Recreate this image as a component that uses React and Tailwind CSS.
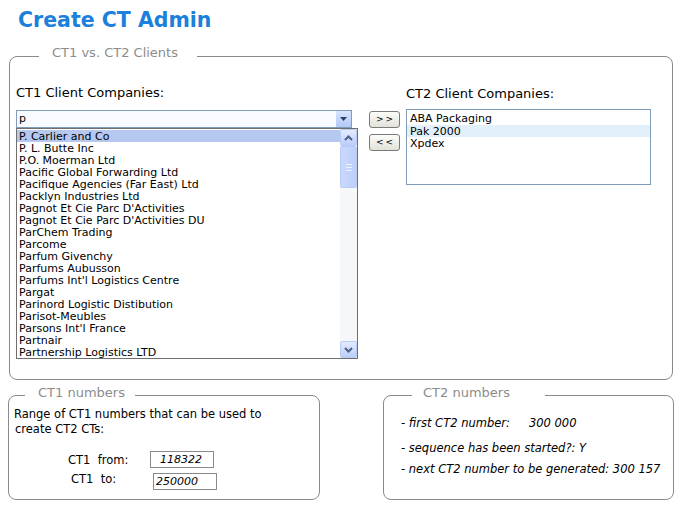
import React from "react";

const ct1Companies = [
  "P. Carlier and Co",
  "P. L. Butte Inc",
  "P.O. Moerman Ltd",
  "Pacific Global Forwarding Ltd",
  "Pacifique Agencies (Far East) Ltd",
  "Packlyn Industries Ltd",
  "Pagnot Et Cie Parc D'Activities",
  "Pagnot Et Cie Parc D'Activities DU",
  "ParChem Trading",
  "Parcome",
  "Parfum Givenchy",
  "Parfums Aubusson",
  "Parfums Int'l Logistics Centre",
  "Pargat",
  "Parinord Logistic Distibution",
  "Parisot-Meubles",
  "Parsons Int'l France",
  "Partnair",
  "Partnership Logistics LTD",
];

const ct2Companies = ["ABA Packaging", "Pak 2000", "Xpdex"];

function Chevron({ up }) {
  return (
    <svg width="9" height="6" viewBox="0 0 9 6">
      <polyline
        points={up ? "1,5 4.5,1.5 8,5" : "1,1 4.5,4.5 8,1"}
        fill="none"
        stroke="#4d6185"
        strokeWidth="2"
      />
    </svg>
  );
}

function ScrollButton({ up }) {
  return (
    <div className="h-[17px] w-[17px] flex items-center justify-center rounded-[2px] border border-[#b7cbf7] bg-gradient-to-b from-[#e3ebfe] to-[#bccefa]">
      <Chevron up={up} />
    </div>
  );
}

function XpButton({ children }) {
  return (
    <div className="w-[31px] h-[17px] flex items-center justify-center rounded-[3px] border border-[#7a7a7a] bg-gradient-to-b from-[#fcfcfa] to-[#e2e2da] text-[9px] leading-none tracking-[2px] pl-[2px]">
      {children}
    </div>
  );
}

export default function App() {
  return (
    <div className="w-[685px] h-[510px] bg-white overflow-hidden font-['DejaVu_Sans',Verdana,sans-serif] text-black">
      <h1 className="ml-[18px] pt-[8px] text-[20.5px] leading-[24px] font-bold text-[#1b7fdc]">
        Create CT Admin
      </h1>

      {/* CT1 vs CT2 clients */}
      <fieldset className="ml-[9px] mt-[14px] w-[664px] h-[334px] border border-[#8a8a8a] rounded-[8px]">
        <legend className="ml-[29px] pl-[13px] pr-[19px] pb-[6px] text-[13px] leading-[14px] text-[#8c8c8c]">
          CT1 vs. CT2 Clients
        </legend>
        <div className="flex pl-[6px] pt-[18px]">
          {/* left column */}
          <div className="w-[342px]">
            <div className="text-[13px] leading-[17px]">CT1 Client Companies:</div>
            <div className="mt-[9px] w-[336px] h-[18px] flex border border-[#7f9db9] bg-[#f7fbff]">
              <div className="flex-1 pl-[2px] text-[11px] leading-[15px]">p</div>
              <div className="w-[15px] h-[16px] flex items-center justify-center bg-gradient-to-b from-[#d6e4fd] to-[#b3c9f6]">
                <svg width="7" height="4" viewBox="0 0 7 4">
                  <polygon points="0,0 7,0 3.5,4" fill="#2b3f6e" />
                </svg>
              </div>
            </div>
            <div className="w-[342px] h-[231px] flex border border-[#6f6f6f] bg-white">
              <div className="flex-1 pt-[1px]">
                {ct1Companies.map((name, i) => (
                  <div
                    key={name}
                    className={`h-[12px] pl-[2px] text-[11px] leading-[14px] whitespace-nowrap ${
                      i === 0 ? "bg-[#b6c8ef]" : ""
                    }`}
                  >
                    {name}
                  </div>
                ))}
              </div>
              <div className="w-[17px] flex flex-col bg-[#f6f7f9]">
                <ScrollButton up />
                <div className="h-[42px] w-[17px] flex flex-col items-center justify-center gap-[2px] rounded-[2px] border border-[#b7cbf7] bg-gradient-to-r from-[#c9d8fc] to-[#bdcffb]">
                  <div className="w-[6px] h-[1px] bg-[#eef3ff]" />
                  <div className="w-[6px] h-[1px] bg-[#eef3ff]" />
                  <div className="w-[6px] h-[1px] bg-[#eef3ff]" />
                </div>
                <div className="flex-1" />
                <ScrollButton />
              </div>
            </div>
          </div>

          {/* move buttons */}
          <div className="ml-[11px] pt-[27px] flex flex-col gap-[6px]">
            <XpButton>&gt;&gt;</XpButton>
            <XpButton>&lt;&lt;</XpButton>
          </div>

          {/* right column */}
          <div className="ml-[6px] w-[245px]">
            <div className="mt-[1px] text-[13px] leading-[17px]">CT2 Client Companies:</div>
            <div className="mt-[7px] h-[76px] border border-[#7f9db9] pt-[2px] bg-white">
              {ct2Companies.map((name, i) => (
                <div
                  key={name}
                  className={`h-[12.5px] pl-[3px] text-[11px] leading-[13.5px] ${
                    i === 1 ? "bg-[#e2f0fb]" : ""
                  }`}
                >
                  {name}
                </div>
              ))}
            </div>
          </div>
        </div>
      </fieldset>

      {/* bottom row */}
      <div className="flex mt-[6px]">
        <fieldset className="ml-[8px] w-[312px] h-[114px] border border-[#8a8a8a] rounded-[8px]">
          <legend className="ml-[16px] pl-[13px] pr-[10px] pb-[4px] text-[13px] leading-[14px] text-[#8c8c8c]">
            CT1 numbers
          </legend>
          <div className="pl-[5px] pt-[3px] text-[11.5px] leading-[15px]">
            <div>Range of CT1 numbers that can be used to</div>
            <div className="pl-[1px]">create CT2 CTs:</div>
            <div className="mt-[14px] flex items-center">
              <div className="ml-[54px] w-[82px] pt-[2px]">CT1&nbsp; from:</div>
              <div className="w-[64px] h-[17px] border border-[#8a8a8a] pl-[9px] italic text-[11px] leading-[15px]">
                118322
              </div>
            </div>
            <div className="mt-[5px] flex items-start">
              <div className="ml-[57px] w-[82px] -mt-[1px]">CT1&nbsp; to:</div>
              <div className="w-[64px] h-[17px] border border-[#8a8a8a] pl-[2px] italic text-[11px] leading-[15px]">
                250000
              </div>
            </div>
          </div>
        </fieldset>

        <fieldset className="ml-[63px] w-[291px] h-[114px] border border-[#8a8a8a] rounded-[8px]">
          <legend className="ml-[28px] pl-[11px] pr-[35px] pb-[4px] text-[13px] leading-[14px] text-[#8c8c8c]">
            CT2 numbers
          </legend>
          <div className="pl-[17px] pt-[12px] text-[11.5px] leading-[15px] italic">
            <div>
              - first CT2 number:<span className="ml-[19px]">300 000</span>
            </div>
            <div className="mt-[10px]">- sequence has been started?: Y</div>
            <div className="mt-[6px]">- next CT2 number to be generated: 300 157</div>
          </div>
        </fieldset>
      </div>
    </div>
  );
}
